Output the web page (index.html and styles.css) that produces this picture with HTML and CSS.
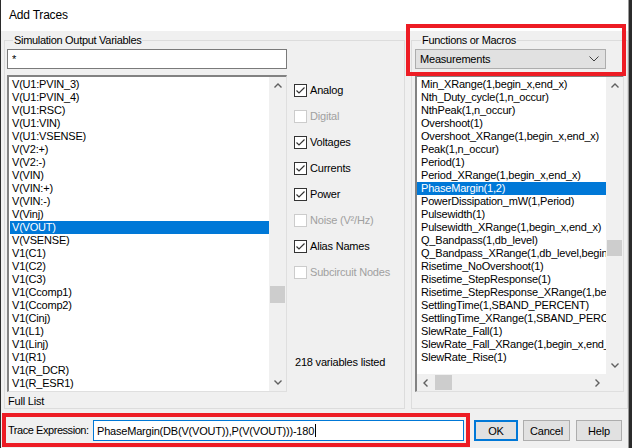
FILE: index.html
```html
<!DOCTYPE html>
<html lang="en">
<head>
  <meta charset="UTF-8">
  <meta name="viewport" content="width=device-width, initial-scale=1.0">
  <title>Add Traces</title>
  <link rel="stylesheet" href="styles.css">
</head>
<body>
  <div class="window">
    <div class="titlebar">Add Traces</div>

    <div class="panels">
      <fieldset class="group group-vars">
        <legend>Simulation Output Variables</legend>
        <input type="text" class="filter" value="*">
        <div class="vars-row">
          <div class="listbox list-vars">
            <ul class="items">
              <li>V(U1:PVIN_3)</li>
              <li>V(U1:PVIN_4)</li>
              <li>V(U1:RSC)</li>
              <li>V(U1:VIN)</li>
              <li>V(U1:VSENSE)</li>
              <li>V(V2:+)</li>
              <li>V(V2:-)</li>
              <li>V(VIN)</li>
              <li>V(VIN:+)</li>
              <li>V(VIN:-)</li>
              <li>V(Vinj)</li>
              <li class="sel">V(VOUT)</li>
              <li>V(VSENSE)</li>
              <li>V1(C1)</li>
              <li>V1(C2)</li>
              <li>V1(C3)</li>
              <li>V1(Ccomp1)</li>
              <li>V1(Ccomp2)</li>
              <li>V1(Cinj)</li>
              <li>V1(L1)</li>
              <li>V1(Linj)</li>
              <li>V1(R1)</li>
              <li>V1(R_DCR)</li>
              <li>V1(R_ESR1)</li>
            </ul>
            <div class="vscroll">
              <div class="arrow"><svg width="8" height="5" viewBox="0 0 8 5"><path d="M0.5 4.5 L4 1 L7.5 4.5" fill="none" stroke="#606060" stroke-width="1.4"/></svg></div>
              <div class="track"><div class="thumb thumb-vars"></div></div>
              <div class="arrow"><svg width="8" height="5" viewBox="0 0 8 5"><path d="M0.5 0.5 L4 4 L7.5 0.5" fill="none" stroke="#606060" stroke-width="1.4"/></svg></div>
            </div>
          </div>

          <div class="options">
            <label class="check"><span class="box"><svg width="11" height="11" viewBox="0 0 11 11"><path d="M1.5 5.5 L4 8 L9.5 2.5" fill="none" stroke="#333" stroke-width="1.2"/></svg></span>Analog</label>
            <label class="check off"><span class="box"></span>Digital</label>
            <label class="check"><span class="box"><svg width="11" height="11" viewBox="0 0 11 11"><path d="M1.5 5.5 L4 8 L9.5 2.5" fill="none" stroke="#333" stroke-width="1.2"/></svg></span>Voltages</label>
            <label class="check"><span class="box"><svg width="11" height="11" viewBox="0 0 11 11"><path d="M1.5 5.5 L4 8 L9.5 2.5" fill="none" stroke="#333" stroke-width="1.2"/></svg></span>Currents</label>
            <label class="check"><span class="box"><svg width="11" height="11" viewBox="0 0 11 11"><path d="M1.5 5.5 L4 8 L9.5 2.5" fill="none" stroke="#333" stroke-width="1.2"/></svg></span>Power</label>
            <label class="check off"><span class="box"></span>Noise (V²/Hz)</label>
            <label class="check"><span class="box"><svg width="11" height="11" viewBox="0 0 11 11"><path d="M1.5 5.5 L4 8 L9.5 2.5" fill="none" stroke="#333" stroke-width="1.2"/></svg></span>Alias Names</label>
            <label class="check off"><span class="box"></span>Subcircuit Nodes</label>
            <div class="count">218 variables listed</div>
          </div>
        </div>
        <div class="full-list">Full List</div>
      </fieldset>

      <fieldset class="group group-funcs">
        <legend>Functions or Macros</legend>
        <div class="select">
          <span>Measurements</span>
          <svg width="10" height="6" viewBox="0 0 10 6"><path d="M0.5 0.5 L5 5 L9.5 0.5" fill="none" stroke="#404040" stroke-width="1"/></svg>
        </div>
        <div class="listbox list-funcs">
          <div class="list-main">
            <ul class="items">
              <li>Min_XRange(1,begin_x,end_x)</li>
              <li>Nth_Duty_cycle(1,n_occur)</li>
              <li>NthPeak(1,n_occur)</li>
              <li>Overshoot(1)</li>
              <li>Overshoot_XRange(1,begin_x,end_x)</li>
              <li>Peak(1,n_occur)</li>
              <li>Period(1)</li>
              <li>Period_XRange(1,begin_x,end_x)</li>
              <li class="sel">PhaseMargin(1,2)</li>
              <li>PowerDissipation_mW(1,Period)</li>
              <li>Pulsewidth(1)</li>
              <li>Pulsewidth_XRange(1,begin_x,end_x)</li>
              <li>Q_Bandpass(1,db_level)</li>
              <li>Q_Bandpass_XRange(1,db_level,begin_x,end_x)</li>
              <li>Risetime_NoOvershoot(1)</li>
              <li>Risetime_StepResponse(1)</li>
              <li>Risetime_StepResponse_XRange(1,begin_x,end_x)</li>
              <li>SettlingTime(1,SBAND_PERCENT)</li>
              <li>SettlingTime_XRange(1,SBAND_PERCENT,begin_x,end_x)</li>
              <li>SlewRate_Fall(1)</li>
              <li>SlewRate_Fall_XRange(1,begin_x,end_x)</li>
              <li>SlewRate_Rise(1)</li>
            </ul>
            <div class="hscroll">
              <div class="arrow"><svg width="5" height="8" viewBox="0 0 5 8"><path d="M4.5 0.5 L1 4 L4.5 7.5" fill="none" stroke="#606060" stroke-width="1.4"/></svg></div>
              <div class="thumb thumb-h"></div>
              <div class="spacer"></div>
              <div class="arrow"><svg width="5" height="8" viewBox="0 0 5 8"><path d="M0.5 0.5 L4 4 L0.5 7.5" fill="none" stroke="#606060" stroke-width="1.4"/></svg></div>
            </div>
          </div>
          <div class="vscroll">
            <div class="arrow"><svg width="8" height="5" viewBox="0 0 8 5"><path d="M0.5 4.5 L4 1 L7.5 4.5" fill="none" stroke="#606060" stroke-width="1.4"/></svg></div>
            <div class="track"><div class="thumb thumb-funcs"></div></div>
            <div class="arrow"><svg width="8" height="5" viewBox="0 0 8 5"><path d="M0.5 0.5 L4 4 L7.5 0.5" fill="none" stroke="#606060" stroke-width="1.4"/></svg></div>
            <div class="corner"></div>
          </div>
        </div>
      </fieldset>
    </div>

    <div class="bottom">
      <div class="expr">
        <span class="expr-label">Trace Expression:</span>
        <div class="expr-input">PhaseMargin(DB(V(VOUT)),P(V(VOUT)))-180<span class="caret"></span></div>
      </div>
      <button class="btn btn-ok">OK</button>
      <button class="btn btn-cancel">Cancel</button>
      <button class="btn btn-help">Help</button>
    </div>

    <div class="mark-funcs"></div>
  </div>
</body>
</html>
```

FILE: styles.css
```css
* {
  box-sizing: border-box;
}
body {
  margin: 0;
  background: #2b2b2b;
  font-family: "Liberation Sans", Arial, sans-serif;
  font-size: 11px;
  letter-spacing: -0.2px;
  color: #000;
}
.window {
  position: relative;
  width: 628px;
  height: 448px;
  margin-left: 1px;
  background: #f0f0f0;
  border-right: 1px solid #9a9a9a;
}
.titlebar {
  height: 31px;
  background: #fff;
  padding-left: 8px;
  line-height: 31px;
  font-size: 12px;
  letter-spacing: -0.2px;
}
.panels {
  display: flex;
  align-items: stretch;
  padding: 3px 0 0 3px;
}
.group {
  margin: 0;
  padding: 0;
  min-width: 0;
  border: 1px solid #dcdcdc;
}
.group legend {
  margin-left: 6px;
  padding: 0 1px;
  line-height: 13px;
  letter-spacing: -0.3px;
}
.group-vars {
  width: 401px;
  padding-left: 2px;
}
.group-funcs {
  width: 217px;
  margin-left: 6px;
  padding-left: 3px;
}
.filter {
  display: block;
  width: 280px;
  height: 20px;
  margin: 2px 0 0 0;
  padding: 0 4px;
  border: 1px solid #7a7a7a;
  background: #fff;
  font: inherit;
  letter-spacing: inherit;
  outline: none;
}
.vars-row {
  display: flex;
  margin-top: 6px;
}
.listbox {
  display: flex;
  height: 317px;
  background: #fff;
  border-style: solid;
  border-width: 2px 1px 1px 2px;
  border-color: #828282 #dfdfdf #dfdfdf #828282;
  overflow: hidden;
}
.list-vars {
  width: 280px;
}
.list-funcs {
  width: 209px;
  margin-top: 6px;
}
.items {
  list-style: none;
  margin: 0;
  padding: 1px 0 0 1px;
  flex: 1;
  min-width: 0;
  overflow: hidden;
}
.items li {
  height: 13px;
  line-height: 13px;
  padding-left: 2px;
  white-space: nowrap;
}
.list-funcs .items {
  padding-left: 0;
}
.list-funcs .items li {
  padding-left: 4px;
}
.items li.sel {
  background: #0078d7;
  color: #fff;
}
.list-main {
  flex: 1;
  min-width: 0;
  display: flex;
  flex-direction: column;
}
.vscroll {
  width: 17px;
  flex: none;
  display: flex;
  flex-direction: column;
  background: #f0f0f0;
}
.track {
  flex: 1;
}
.arrow {
  width: 17px;
  height: 17px;
  flex: none;
  display: flex;
  align-items: center;
  justify-content: center;
}
.thumb {
  background: #cdcdcd;
}
.vscroll .thumb {
  margin: 0 1px;
}
.thumb-vars {
  height: 17px;
  margin-top: 192px !important;
}
.thumb-funcs {
  height: 16px;
  margin-top: 146px !important;
}
.corner {
  height: 17px;
  flex: none;
  background: #f0f0f0;
}
.hscroll {
  height: 17px;
  flex: none;
  display: flex;
  background: #f0f0f0;
}
.thumb-h {
  width: 17px;
  margin: 1px 0 1px 1px;
}
.spacer {
  flex: 1;
}
.options {
  margin-left: 7px;
  padding: 2px 0 0 0;
}
.check {
  display: flex;
  align-items: center;
  height: 26px;
}
.box {
  width: 13px;
  height: 13px;
  margin-right: 3px;
  border: 1px solid #333;
  background: #fff;
  display: flex;
  align-items: center;
  justify-content: center;
}
.check.off {
  color: #a0a0a0;
}
.check.off .box {
  border-color: #cccccc;
}
.count {
  margin-top: 71px;
  padding-left: 1px;
  line-height: 13px;
}
.full-list {
  margin: 3px 0 0 1px;
  line-height: 13px;
}
.select {
  display: flex;
  align-items: center;
  justify-content: space-between;
  width: 191px;
  height: 20px;
  margin-top: 2px;
  padding: 0 6px 0 4px;
  border: 1px solid #adadad;
  background: #e1e1e1;
}
.bottom {
  display: flex;
  align-items: flex-start;
  margin-top: 4px;
  padding-left: 1px;
}
.expr {
  display: flex;
  width: 468px;
  height: 34px;
  padding: 3px 2px 0 2px;
  border: 4px solid #ed1c24;
}
.expr-label {
  flex: none;
  width: 85px;
  line-height: 21px;
  letter-spacing: -0.45px;
  white-space: nowrap;
}
.expr-input {
  display: flex;
  align-items: center;
  width: 371px;
  height: 21px;
  padding-left: 3px;
  border: 1px solid #0078d7;
  background: #fff;
}
.caret {
  width: 1px;
  height: 13px;
  margin-left: 1px;
  background: #000;
}
.btn {
  height: 21px;
  margin-top: 7px;
  padding: 0;
  border: 1px solid #adadad;
  background: #e1e1e1;
  font: inherit;
  letter-spacing: inherit;
  color: #000;
}
.btn-ok {
  width: 44px;
  margin-left: 4px;
  border-color: #0078d7;
  box-shadow: inset 0 0 0 1px #0078d7;
}
.btn-cancel {
  width: 47px;
  margin-left: 5px;
}
.btn-help {
  width: 46px;
  margin-left: 6px;
}
.mark-funcs {
  position: absolute;
  left: 405px;
  top: 24px;
  width: 220px;
  height: 52px;
  border: 4px solid #ed1c24;
}
```
